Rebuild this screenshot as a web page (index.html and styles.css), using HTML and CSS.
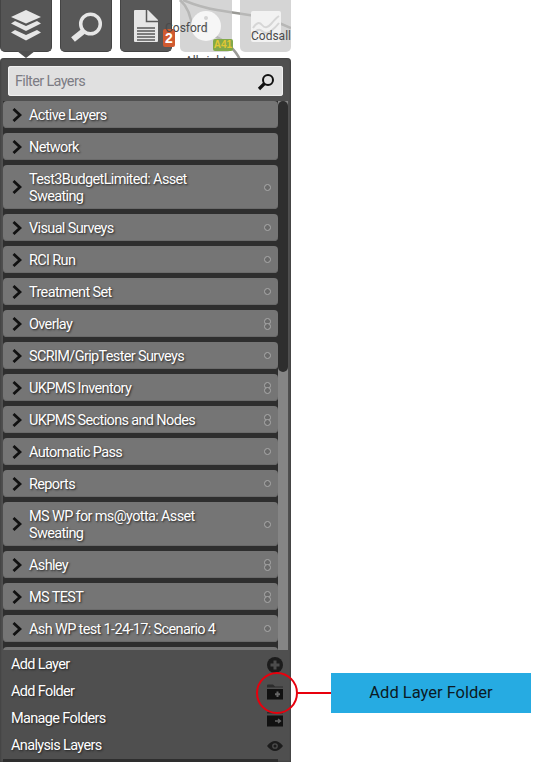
FILE: index.html
```html
<!DOCTYPE html>
<html lang="en">
<head>
<meta charset="utf-8">
<title>Layers panel</title>
<link rel="stylesheet" href="styles.css">
</head>
<body>
<div class="stage">
  <svg class="map-roads" width="291" height="60" viewBox="0 0 291 60" aria-hidden="true">
    <path d="M180 0 C187 6 191 14 192 28 C193 33 200 33 210 34 C225 40 236 50 240 60" class="road"/>
    <path d="M183 0 C195 5 205 8 217 10 C235 13 250 15 263 17 C272 20 282 24 291 28" class="road"/>
  </svg>
  <div class="toolbar">
    <div class="tool tool-active">
      <svg width="30" height="31" viewBox="0 0 30 31"><path d="M15 0 L30 7 L15 13.500 L0 7 Z" fill="#e6e6e6"/><path d="M4 11 L15 16 L26 11 L30 13.500 L15 21 L0 13.500 Z" fill="#e6e6e6"/><path d="M4 20 L15 25 L26 20 L30 22.500 L15 30.500 L0 22.500 Z" fill="#e6e6e6"/></svg>
    </div>
    <div class="tool">
      <svg width="36" height="36" viewBox="0 0 36 36"><circle cx="22.500" cy="16" r="9.800" fill="none" stroke="#e6e6e6" stroke-width="3.500"/><path d="M15 23.500 L5 31.500" stroke="#e6e6e6" stroke-width="6"/></svg>
    </div>
    <div class="tool tool-doc">
      <svg width="24" height="32" viewBox="0 0 24 32"><path d="M1 0 H14 L24 10 V31 Q24 32 23 32 H1 Q0 32 0 31 V1 Q0 0 1 0 Z" fill="#e6e6e6"/><path d="M12.500 0 V11.500 H24" fill="none" stroke="#5a5a5a" stroke-width="1.500"/><path d="M3 18 H21 M3 21 H21 M3 24 H21 M3 27 H21 M3 30 H21" stroke="#5a5a5a" stroke-width="1.300"/></svg>
      <span class="count">2</span>
    </div>
    <div class="tool tool-muted">
      <svg width="30" height="30" viewBox="0 0 30 30"><circle cx="15" cy="15" r="15" fill="#f6f6f6"/><circle cx="15" cy="7" r="2" fill="#d4d4d4"/><rect x="13.500" y="11" width="3" height="11" fill="#e2e2e2"/></svg>
      <span class="shield">A41</span>
    </div>
    <div class="tool tool-muted">
      <svg width="30" height="31" viewBox="0 0 30 31"><rect width="30" height="31" rx="2" fill="#f2f2f2"/><path d="M2 17 Q7 9 11 14 T20 13 T28 5 M2 24 Q7 16 11 20 T20 20 T28 12" fill="none" stroke="#d6d6d6" stroke-width="2"/></svg>
    </div>
  </div>
  <span class="map-label label-cosford">Cosford</span>
  <span class="map-label label-codsall">Codsall</span>
  <span class="map-label label-albrighton">Albrighton</span>

  <section class="panel">
    <span class="pointer"></span>
    <div class="filter">
      <span class="filter-text">Filter Layers</span>
      <svg width="18" height="18" viewBox="0 0 18 18"><circle cx="11" cy="7" r="5" fill="none" stroke="#111" stroke-width="2"/><path d="M7.500 10.500 L2 16" stroke="#111" stroke-width="3.200"/></svg>
    </div>
    <div class="list">
      <div class="rows">
        <div class="row"><svg class="chev" width="10" height="14" viewBox="0 0 10 14"><path d="M1.500 1 L8 7 L1.500 13" /></svg><span class="name">Active Layers</span></div>
        <div class="row"><svg class="chev" width="10" height="14" viewBox="0 0 10 14"><path d="M1.500 1 L8 7 L1.500 13" /></svg><span class="name">Network</span></div>
        <div class="row row-tall"><svg class="chev" width="10" height="14" viewBox="0 0 10 14"><path d="M1.500 1 L8 7 L1.500 13" /></svg><span class="name">Test3BudgetLimited: Asset Sweating</span><span class="dot"></span></div>
        <div class="row"><svg class="chev" width="10" height="14" viewBox="0 0 10 14"><path d="M1.500 1 L8 7 L1.500 13" /></svg><span class="name">Visual Surveys</span><span class="dot"></span></div>
        <div class="row"><svg class="chev" width="10" height="14" viewBox="0 0 10 14"><path d="M1.500 1 L8 7 L1.500 13" /></svg><span class="name">RCI Run</span><span class="dot"></span></div>
        <div class="row"><svg class="chev" width="10" height="14" viewBox="0 0 10 14"><path d="M1.500 1 L8 7 L1.500 13" /></svg><span class="name">Treatment Set</span><span class="dot"></span></div>
        <div class="row"><svg class="chev" width="10" height="14" viewBox="0 0 10 14"><path d="M1.500 1 L8 7 L1.500 13" /></svg><span class="name">Overlay</span><span class="dots"><span class="dot"></span><span class="dot"></span></span></div>
        <div class="row"><svg class="chev" width="10" height="14" viewBox="0 0 10 14"><path d="M1.500 1 L8 7 L1.500 13" /></svg><span class="name">SCRIM/GripTester Surveys</span><span class="dot"></span></div>
        <div class="row"><svg class="chev" width="10" height="14" viewBox="0 0 10 14"><path d="M1.500 1 L8 7 L1.500 13" /></svg><span class="name">UKPMS Inventory</span><span class="dots"><span class="dot"></span><span class="dot"></span></span></div>
        <div class="row"><svg class="chev" width="10" height="14" viewBox="0 0 10 14"><path d="M1.500 1 L8 7 L1.500 13" /></svg><span class="name">UKPMS Sections and Nodes</span><span class="dots"><span class="dot"></span><span class="dot"></span></span></div>
        <div class="row"><svg class="chev" width="10" height="14" viewBox="0 0 10 14"><path d="M1.500 1 L8 7 L1.500 13" /></svg><span class="name">Automatic Pass</span><span class="dot"></span></div>
        <div class="row"><svg class="chev" width="10" height="14" viewBox="0 0 10 14"><path d="M1.500 1 L8 7 L1.500 13" /></svg><span class="name">Reports</span><span class="dot"></span></div>
        <div class="row row-tall"><svg class="chev" width="10" height="14" viewBox="0 0 10 14"><path d="M1.500 1 L8 7 L1.500 13" /></svg><span class="name">MS WP for ms@yotta: Asset Sweating</span><span class="dot"></span></div>
        <div class="row"><svg class="chev" width="10" height="14" viewBox="0 0 10 14"><path d="M1.500 1 L8 7 L1.500 13" /></svg><span class="name">Ashley</span><span class="dots"><span class="dot"></span><span class="dot"></span></span></div>
        <div class="row"><svg class="chev" width="10" height="14" viewBox="0 0 10 14"><path d="M1.500 1 L8 7 L1.500 13" /></svg><span class="name">MS TEST</span><span class="dots"><span class="dot"></span><span class="dot"></span></span></div>
        <div class="row"><svg class="chev" width="10" height="14" viewBox="0 0 10 14"><path d="M1.500 1 L8 7 L1.500 13" /></svg><span class="name">Ash WP test 1-24-17: Scenario 4</span><span class="dot"></span></div>
        <div class="row row-hidden"></div>
      </div>
      <div class="scrollbar"><div class="thumb"></div></div>
    </div>
    <div class="actions">
      <div class="action"><span>Add Layer</span>
        <svg width="16" height="16" viewBox="0 0 16 16"><circle cx="8" cy="8" r="8" fill="#1c1c1c"/><path d="M8 3.500 V12.500 M3.500 8 H12.500" stroke="#4c4c4c" stroke-width="3"/></svg></div>
      <div class="action"><span>Add Folder</span>
        <svg width="16" height="16" viewBox="0 0 16 16"><path d="M0 1.500 Q0 0.500 1 0.500 H6 L8 2.500 H16 V3.500 H0 Z" fill="#2c2c2c"/><path d="M0 5 H16 V15.500 H0 Z" fill="#111"/><path d="M10.500 7.500 V13 M8 10.200 H13" stroke="#666" stroke-width="2"/></svg></div>
      <div class="action"><span>Manage Folders</span>
        <svg width="16" height="16" viewBox="0 0 16 16"><path d="M0 1 H16 V2.500 H0 Z" fill="#2c2c2c"/><path d="M0 4.500 H16 V15.500 H0 Z" fill="#111"/><path d="M8 10 H13 M11 8 L13.500 10 L11 12" fill="none" stroke="#666" stroke-width="1.300"/></svg></div>
      <div class="action"><span>Analysis Layers</span>
        <svg width="16" height="10" viewBox="0 0 16 10"><path d="M0 5 Q8 -5 16 5 Q8 15 0 5 Z" fill="#1c1c1c"/><circle cx="8" cy="5" r="2.200" fill="none" stroke="#4c4c4c" stroke-width="1.300"/></svg></div>
    </div>
  </section>

  <span class="ring"></span>
  <span class="leader"></span>
  <div class="callout">Add Layer Folder</div>
</div>
</body>
</html>
```

FILE: styles.css
```css
* { box-sizing: border-box; }

html, body {
  margin: 0;
  height: 762px;
  overflow: hidden;
  background: #fff;
}

body {
  font-family: Roboto, "Liberation Sans", sans-serif;
}

.stage {
  position: relative;
  width: 541px;
  height: 762px;
  overflow: hidden;
}

.map-roads {
  position: absolute;
  top: 0;
  left: 0;
}

.road {
  fill: none;
  stroke: #9a9a96;
  stroke-width: 2.500;
}

.toolbar {
  position: relative;
  display: flex;
  gap: 8px;
  height: 58px;
  align-items: flex-start;
}

.tool {
  position: relative;
  width: 52px;
  height: 52px;
  flex: none;
  display: flex;
  align-items: center;
  justify-content: center;
  background: #585858;
  border: 1px solid #444;
  border-top: 0;
  border-radius: 0 0 5px 5px;
}

.tool-active { background: #555; }

.tool-doc svg { margin-top: 0; margin-left: 0; }

.tool-muted {
  background: rgba(195, 195, 195, 0.7);
  border: 0;
  border-radius: 0 0 5px 5px;
}

.tool-muted + .tool-muted { width: 51px; }

.count {
  position: absolute;
  left: 42px;
  top: 29px;
  width: 12px;
  height: 18px;
  border-radius: 2px;
  background: #d05a30;
  color: #fff;
  font: 700 14px/18px "Liberation Sans", sans-serif;
  text-align: center;
}

.shield {
  position: absolute;
  left: 33px;
  top: 39px;
  width: 20px;
  height: 12px;
  border-radius: 2px;
  background: #83a94a;
  color: #e2c732;
  font: 700 10px/12px "Liberation Sans", sans-serif;
  text-align: center;
}

.map-label {
  position: absolute;
  font-size: 12px;
  line-height: 14px;
  color: #4a4a4a;
}

.label-cosford { left: 165px; top: 21px; }
.label-codsall { left: 251px; top: 29px; }
.label-albrighton { left: 185px; top: 54px; }

.panel {
  position: relative;
  display: flex;
  flex-direction: column;
  width: 291px;
  height: 704px;
  padding: 8px 0 0;
  background: #4f4f4f;
  border-radius: 4px 4px 0 0;
  box-shadow: inset 0 0 2px #2c2c2c;
}

.pointer {
  position: absolute;
  left: 17px;
  top: -7px;
  border-left: 9px solid transparent;
  border-right: 9px solid transparent;
  border-top: 7px solid #4f4f4f;
}

.filter {
  flex: none;
  display: flex;
  align-items: center;
  justify-content: space-between;
  height: 30px;
  margin: 0 8px;
  padding: 1px 8px 0 7px;
  background: #e0e0e0;
  border-radius: 3px;
  box-shadow: inset 0 0 0 1px #f0f0f0;
}

.filter-text {
  font-size: 14.500px;
  letter-spacing: -0.650px;
  color: #7c7c84;
}

.list {
  flex: 1;
  min-height: 0;
  display: flex;
  margin-top: 5px;
  padding-left: 3px;
  overflow: hidden;
}

.rows {
  width: 275px;
  flex: none;
  display: flex;
  flex-direction: column;
  gap: 5px;
  background: #2e2e2e;
}

.row {
  flex: none;
  display: flex;
  align-items: center;
  min-height: 27px;
  padding: 0 7px 0 9px;
  background: #757575;
  border-radius: 4px;
  box-shadow: inset 0 -1px 0 #6a6a6a;
}

.row-tall { min-height: 44px; }

.row-tall .name { flex: none; width: 190px; }

.chev {
  flex: none;
  margin-right: 7px;
  fill: none;
  stroke: #111;
  stroke-width: 2.800;
}

.name {
  flex: 1;
  margin-top: 2px;
  font-size: 14.500px;
  line-height: 17px;
  letter-spacing: -0.650px;
  color: #fff;
  text-shadow: 1px 1px 2px #222;
}

.dot {
  flex: none;
  display: block;
  width: 7px;
  height: 7px;
  margin-left: auto;
  border: 1px solid #aaa;
  border-radius: 50%;
  background: #6a6a6a;
}

.dots {
  flex: none;
  display: flex;
  flex-direction: column;
  margin-left: auto;
}

.dots .dot + .dot { margin-top: -2px; }

.scrollbar {
  flex: none;
  width: 10px;
  height: 549px;
  background: #858585;
}

.thumb {
  height: 271px;
  background: #2e2e2e;
  border-radius: 5px;
}

.actions {
  position: absolute;
  left: 3px;
  right: 2px;
  bottom: 3px;
  height: 109px;
  padding: 1px 0 0 8px;
  display: flex;
  flex-direction: column;
  background: #4f4f4f;
}

.action {
  flex: 1;
  display: flex;
  align-items: center;
  justify-content: space-between;
  padding-right: 6px;
  font-size: 14.500px;
  letter-spacing: -0.650px;
  color: #fff;
  text-shadow: 1px 1px 2px #222;
}

.ring {
  position: absolute;
  left: 256px;
  top: 672px;
  width: 42px;
  height: 42px;
  border: 2.500px solid #e8000d;
  border-radius: 50%;
}

.leader {
  position: absolute;
  left: 297px;
  top: 692px;
  width: 34px;
  height: 2px;
  background: #e8000d;
}

.callout {
  position: absolute;
  left: 331px;
  top: 673px;
  width: 200px;
  height: 40px;
  background: #26abe2;
  color: #0c1a24;
  font-size: 16.500px;
  line-height: 40px;
  text-align: center;
}
```
